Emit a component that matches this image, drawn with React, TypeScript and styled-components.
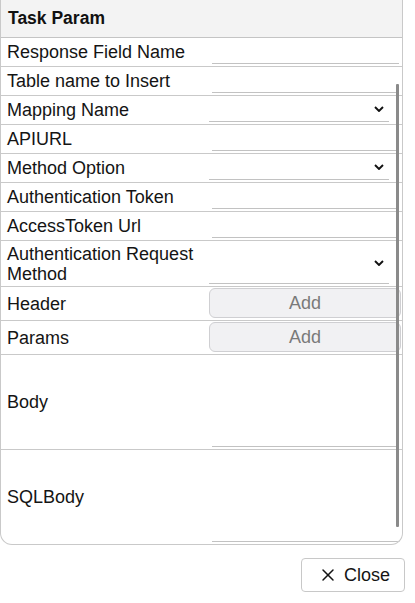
import React from "react";
import styled, { createGlobalStyle } from "styled-components";
import { X } from "lucide-react";

const GlobalStyle = createGlobalStyle`
  html, body { margin: 0; padding: 0; background: #fff; }
  body { font-family: "Liberation Sans", Arial, sans-serif; color: #141414; }
  * { box-sizing: border-box; }
`;

const Page = styled.div`
  width: 415px;
  display: flex;
  flex-direction: column;
`;

const Panel = styled.div`
  position: relative;
  width: 403px;
  border: 1px solid #c9c9c9;
  border-top: none;
  border-radius: 0 0 12px 12px;
  overflow: hidden;
`;

const Header = styled.div`
  height: 38px;
  display: flex;
  align-items: center;
  padding-left: 7px;
  background: #f3f3f3;
  border-bottom: 1px solid #c4c4c4;
  font-size: 17.5px;
  font-weight: bold;
  color: #111;
`;

const Row = styled.div<{ $h: number; $last?: boolean }>`
  display: grid;
  grid-template-columns: 208px 1fr;
  height: ${(p) => p.$h}px;
  border-bottom: ${(p) => (p.$last ? "none" : "1px solid #c9c9c9")};
`;

const Label = styled.div`
  display: flex;
  align-items: center;
  padding-left: 6px;
  font-size: 18px;
  line-height: 20px;
`;

const Cell = styled.div`
  position: relative;
  display: flex;
  flex-direction: column;
  justify-content: flex-end;
  padding-bottom: 2px;
`;

const TextLine = styled.div`
  margin-left: 3px;
  margin-right: 3px;
  height: 1px;
  background: #c2c2c2;
`;

const SelectBox = styled.div`
  flex: 1;
  display: flex;
  flex-direction: column;
  justify-content: center;
  align-items: flex-end;
  padding: 1px 18px 0 0;
`;

const SelectLine = styled.div`
  margin-left: 0;
  margin-right: 13px;
  height: 1px;
  background: #c2c2c2;
`;

const AddCell = styled.div`
  display: flex;
  align-items: flex-start;
  padding: 1px 0 0 0;
`;

const AddButton = styled.button`
  width: 192px;
  height: 30px;
  border: 1px solid #cfcfd2;
  border-radius: 6px;
  background: #f1f1f3;
  color: #7a7a7a;
  font-family: "Liberation Sans", Arial, sans-serif;
  font-size: 18px;
  padding: 0;
`;

const Scrollbar = styled.div`
  position: absolute;
  left: 395px;
  top: 84px;
  width: 3px;
  height: 443px;
  background: #8a8a8a;
  border-radius: 1px;
`;

const Footer = styled.div`
  display: flex;
  justify-content: flex-end;
  padding: 13px 10px 0 0;
`;

const CloseButton = styled.button`
  display: flex;
  align-items: center;
  justify-content: center;
  gap: 6px;
  width: 104px;
  height: 34px;
  border: 1px solid #c8c8c8;
  border-radius: 4px;
  background: #fff;
  color: #141414;
  font-family: "Liberation Sans", Arial, sans-serif;
  font-size: 18px;
  padding: 0 0 0 2px;
`;

const Chevron = () => (
  <svg width="10" height="6" viewBox="0 0 10 6">
    <path d="M1 1 L5 5 L9 1" fill="none" stroke="#111" strokeWidth="1.9" />
  </svg>
);

type Kind = "text" | "select" | "add" | "area";

const rows: { label: string; kind: Kind; h: number }[] = [
  { label: "Response Field Name", kind: "text", h: 29 },
  { label: "Table name to Insert", kind: "text", h: 29 },
  { label: "Mapping Name", kind: "select", h: 29 },
  { label: "APIURL", kind: "text", h: 29 },
  { label: "Method Option", kind: "select", h: 29 },
  { label: "Authentication Token", kind: "text", h: 29 },
  { label: "AccessToken Url", kind: "text", h: 29 },
  { label: "Authentication Request Method", kind: "select", h: 46 },
  { label: "Header", kind: "add", h: 34 },
  { label: "Params", kind: "add", h: 34 },
  { label: "Body", kind: "area", h: 95 },
  { label: "SQLBody", kind: "area", h: 94 },
];

export default function App() {
  return (
    <>
      <GlobalStyle />
      <Page>
        <Panel>
          <Header>Task Param</Header>
          {rows.map((r, i) => (
            <Row key={r.label} $h={r.h} $last={i === rows.length - 1}>
              <Label>{r.label}</Label>
              {r.kind === "add" ? (
                <AddCell>
                  <AddButton>Add</AddButton>
                </AddCell>
              ) : (
                <Cell>
                  {r.kind === "select" && (
                    <SelectBox>
                      <Chevron />
                    </SelectBox>
                  )}
                  {r.kind === "select" ? <SelectLine /> : <TextLine />}
                </Cell>
              )}
            </Row>
          ))}
          <Scrollbar />
        </Panel>
        <Footer>
          <CloseButton>
            <X size={20} strokeWidth={1.8} />
            Close
          </CloseButton>
        </Footer>
      </Page>
    </>
  );
}
